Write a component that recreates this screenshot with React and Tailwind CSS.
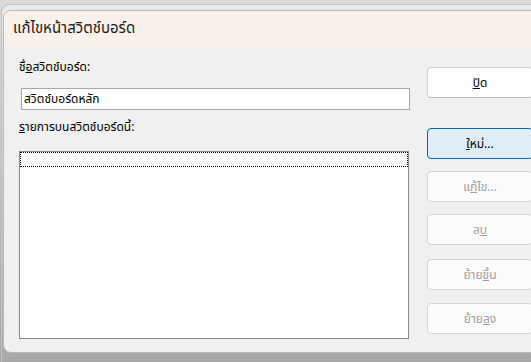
import React from 'react';

const font = { fontFamily: '"Noto Sans Thai", Tahoma, "Leelawadee UI", "Liberation Sans", sans-serif' };

const Btn = ({ children, top, primary, disabled }) => (
  <button
    className={`w-[106px] h-[31px] shrink-0 rounded-[4px] border text-[12px] ${
      primary
        ? 'bg-[#e0eef9] border-[#0067c0] text-black'
        : disabled
        ? 'bg-[#fbfbfb] border-[#d5d5d5] text-[#a0a0a0]'
        : 'bg-[#fdfdfd] border-[#d0d0d0] border-b-[#bcbcbc] text-black'
    }`}
    style={{ marginTop: top }}
  >
    {children}
  </button>
);

export default function App() {
  return (
    <div className="w-[531px] h-[362px] overflow-hidden bg-gradient-to-b from-[#dcdcdc] to-[#a7a7a7] pt-[4px] pl-[1px]" style={font}>
      <div className="h-[380px] border-t border-l border-[#c2c2c2] rounded-tl-[8px] bg-gradient-to-b from-[#ebebeb] via-[#c8c8c8] to-[#a4a4a4] pt-[5px] pl-[1px]">
        <div className="w-[540px] h-[343px] flex flex-col border border-[#b9b9b9] rounded-[8px] overflow-hidden bg-[#f0f0f0]">
          <div className="h-[36px] shrink-0 bg-[#f9f1ec] flex items-center pl-[9px] text-[15px] text-[#1a1a1a]">
            แก้ไขหน้าสวิตช์บอร์ด
          </div>
          <div className="flex-1 flex">
            <div className="w-[406px] pl-[15px] flex flex-col">
              <div className="mt-[12px] h-[16px] leading-[16px] text-[12px] text-black">
                ชื่<span className="underline">อ</span>สวิตช์บอร์ด:
              </div>
              <div className="mt-[13px] ml-[2px] w-[389px] h-[22px] border border-[#a8a8a8] bg-white flex items-center pl-[2px] text-[12px] text-black">
                สวิตช์บอร์ดหลัก
              </div>
              <div className="mt-[9px] h-[16px] leading-[16px] text-[12px] text-black">
                <span className="underline">ร</span>ายการบนสวิตช์บอร์ดนี้:
              </div>
              <div className="mt-[16px] w-[390px] h-[188px] border border-[#8a8a8f] bg-white">
                <div className="h-[15px] border border-dotted border-black" />
              </div>
            </div>
            <div className="ml-[17px] flex flex-col">
              <Btn top="20px">
                <span className="underline">ปิ</span>ด
              </Btn>
              <Btn top="30px" primary>
                <span className="underline">ใ</span>หม่...
              </Btn>
              <Btn top="12px" disabled>
                แ<span className="underline">ก้</span>ไข...
              </Btn>
              <Btn top="12px" disabled>
                ล<span className="underline">บ</span>
              </Btn>
              <Btn top="14px" disabled>
                ย้าย<span className="underline">ขึ้</span>น
              </Btn>
              <Btn top="13px" disabled>
                ย้าย<span className="underline">ล</span>ง
              </Btn>
            </div>
          </div>
        </div>
      </div>
    </div>
  );
}
